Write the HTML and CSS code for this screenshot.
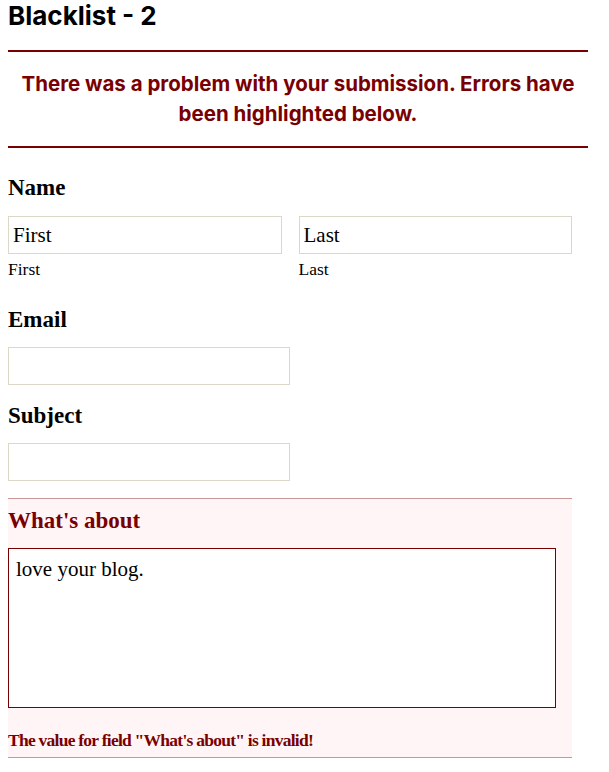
FILE: index.html
```html
<!DOCTYPE html>
<html lang="en">
<head>
<meta charset="utf-8">
<title>Blacklist - 2</title>
<link rel="stylesheet" href="styles.css">
</head>
<body>
<div class="page">
  <h2 class="title">Blacklist - 2</h2>
  <div class="validation">There was a problem with your submission. Errors have been highlighted below.</div>
  <ul class="fields">
    <li class="field field-name">
      <label class="label">Name</label>
      <div class="name-row">
        <span class="name-part">
          <input class="input" type="text" value="First">
          <label class="sublabel">First</label>
        </span>
        <span class="name-part">
          <input class="input" type="text" value="Last">
          <label class="sublabel">Last</label>
        </span>
      </div>
    </li>
    <li class="field field-email">
      <label class="label">Email</label>
      <input class="input medium" type="text">
    </li>
    <li class="field field-subject">
      <label class="label">Subject</label>
      <input class="input medium" type="text">
    </li>
    <li class="field field-error">
      <label class="label label-error">What's about</label>
      <textarea class="textarea">love your blog.</textarea>
      <div class="message">The value for field "What's about" is invalid!</div>
    </li>
  </ul>
</div>
</body>
</html>
```
FILE: styles.css
```css
html, body {
  margin: 0;
  padding: 0;
  background: #ffffff;
}
body {
  padding: 0 8px;
}
.page {
  width: 580px;
}
.title {
  margin: 0;
  font-family: Inter, "Liberation Sans", sans-serif;
  font-weight: 700;
  font-size: 26px;
  line-height: 32px;
  color: #000;
}
.validation {
  margin-top: 18px;
  border-top: 2px solid #790000;
  border-bottom: 2px solid #790000;
  padding: 17px 0;
  font-family: Inter, "Liberation Sans", sans-serif;
  font-weight: 700;
  font-size: 20.5px;
  line-height: 30px;
  text-align: center;
  color: #790000;
}
.fields {
  list-style: none;
  margin: 0;
  padding: 0;
  width: 564px;
}
.field {
  display: flex;
  flex-direction: column;
  align-items: flex-start;
}
.field-name { margin-top: 27px; }
.field-email { margin-top: 28px; }
.field-subject { margin-top: 18px; }
.label {
  display: block;
  font-family: "Liberation Serif", serif;
  font-weight: 700;
  font-size: 23px;
  line-height: 26px;
  color: #000;
  margin-bottom: 15px;
}
.field-email .label, .field-subject .label { margin-bottom: 14px; }
.name-row {
  display: flex;
  gap: 17px;
  width: 564px;
}
.name-part {
  flex: 1;
  display: flex;
  flex-direction: column;
}
.input {
  box-sizing: border-box;
  width: 100%;
  height: 38px;
  margin: 0;
  border: 1px solid #dcd7c7;
  padding: 0 4px;
  font-family: "Liberation Serif", serif;
  font-size: 21px;
  color: #000;
  background: #fff;
  outline: none;
}
.input.medium {
  width: 282px;
}
.sublabel {
  font-family: "Liberation Serif", serif;
  font-size: 17.5px;
  line-height: 20px;
  margin-top: 5px;
  color: #000;
}
.field-error {
  margin-top: 17px;
  background: #fff5f6;
  border-top: 1px solid #c99696;
  border-bottom: 1px solid #c99696;
  padding-top: 9px;
}
.label-error {
  color: #790000;
  margin-bottom: 14px;
}
.textarea {
  box-sizing: border-box;
  width: 548px;
  height: 160px;
  margin: 0;
  border: 1px solid #790000;
  padding: 8px 7px;
  font-family: "Liberation Serif", serif;
  font-size: 21px;
  line-height: 24px;
  color: #000;
  background: #fff;
  resize: none;
  outline: none;
}
.message {
  margin-top: 22px;
  margin-bottom: 7px;
  font-family: "Liberation Serif", serif;
  font-weight: 700;
  font-size: 17.5px;
  letter-spacing: -0.75px;
  line-height: 20px;
  color: #790000;
}
```
